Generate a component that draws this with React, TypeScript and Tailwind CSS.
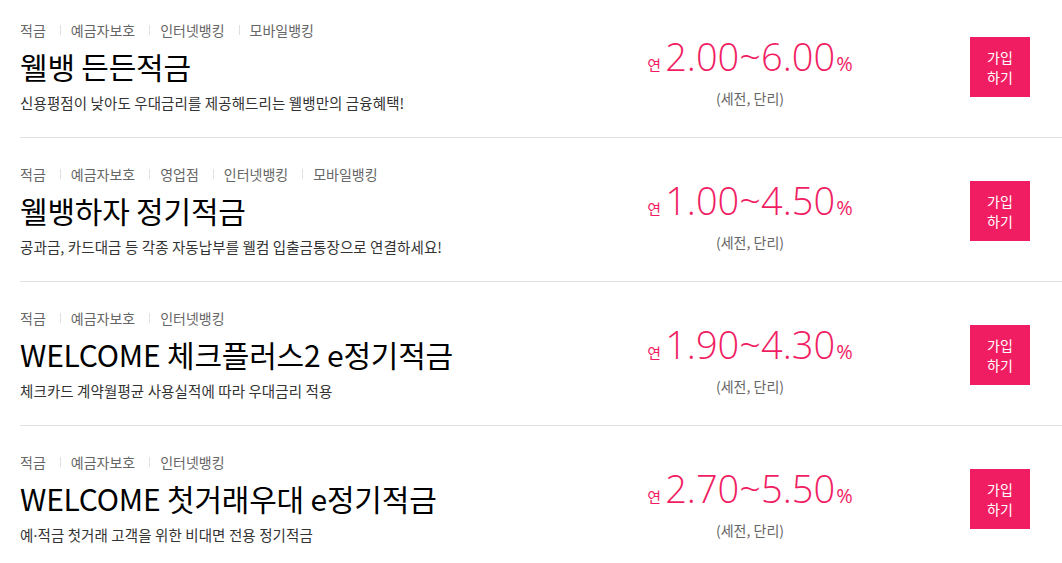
import type { ReactNode } from 'react';

const products: {
  tags: string[];
  name: string;
  desc: ReactNode;
  min: string;
  max: string;
}[] = [
  {
    tags: ['적금', '예금자보호', '인터넷뱅킹', '모바일뱅킹'],
    name: '웰뱅 든든적금',
    desc: '신용평점이 낮아도 우대금리를 제공해드리는 웰뱅만의 금융혜택!',
    min: '2.00',
    max: '6.00',
  },
  {
    tags: ['적금', '예금자보호', '영업점', '인터넷뱅킹', '모바일뱅킹'],
    name: '웰뱅하자 정기적금',
    desc: '공과금, 카드대금 등 각종 자동납부를 웰컴 입출금통장으로 연결하세요!',
    min: '1.00',
    max: '4.50',
  },
  {
    tags: ['적금', '예금자보호', '인터넷뱅킹'],
    name: 'WELCOME 체크플러스2 e정기적금',
    desc: '체크카드 계약월평균 사용실적에 따라 우대금리 적용',
    min: '1.90',
    max: '4.30',
  },
  {
    tags: ['적금', '예금자보호', '인터넷뱅킹'],
    name: 'WELCOME 첫거래우대 e정기적금',
    desc: (
      <>
        예<span className="font-['Noto_Sans',sans-serif]">·</span>적금 첫거래 고객을 위한 비대면 전용 정기적금
      </>
    ),
    min: '2.70',
    max: '5.50',
  },
];

type Product = (typeof products)[number];

function ProductRow({ item, first }: { item: Product; first: boolean }) {
  return (
    <li
      className={`flex items-center border-b border-[#e2e2e2] pb-[24px] ${first ? 'pt-[20px]' : 'pt-[26px]'}`}
    >
      {/* Info */}
      <div className="flex-1 min-w-0">
        <div className="flex items-center h-[20px] text-[14px] text-[#666]">
          {item.tags.map((tag, i) => (
            <span key={tag} className="flex items-center">
              {i > 0 && <span className="ml-[14px] mr-[10px] w-px h-[10px] bg-[#e0e0e0]" />}
              {tag}
            </span>
          ))}
        </div>
        <h3 className="mt-[6px] text-[30px] leading-[40px] text-black tracking-[-0.2px]">{item.name}</h3>
        <p className="mt-[7px] text-[14.5px] leading-[20px] tracking-[0.1px] text-[#333]">{item.desc}</p>
      </div>

      {/* Rate */}
      <div className="w-[260px] flex flex-col items-center mt-[6px]">
        <div className="flex items-baseline h-[50px] text-[#f11d63]">
          <span className="text-[15px] mr-[4px]">연</span>
          <span className="text-[38px] leading-[50px] font-light font-['Open_Sans',sans-serif]">
            {item.min}~{item.max}
          </span>
          <span className="text-[20px] ml-[1px] font-['Open_Sans',sans-serif]">%</span>
        </div>
        <p className="mt-[7px] text-[14px] leading-[20px] text-[#666]">(세전, 단리)</p>
      </div>

      {/* CTA */}
      <button className="ml-[90px] mr-[32px] w-[60px] h-[60px] bg-[#f11d63] text-white text-[14px] leading-[20px] flex flex-col items-center justify-center">
        <span>가입</span>
        <span>하기</span>
      </button>
    </li>
  );
}

export default function App() {
  return (
    <div
      className="w-[1062px] h-[563px] overflow-hidden bg-white pl-[20px]"
      style={{ fontFamily: '"Noto Sans CJK KR", "Noto Sans", sans-serif' }}
    >
      <ul>
        {products.map((item, i) => (
          <ProductRow key={item.name} item={item} first={i === 0} />
        ))}
      </ul>
    </div>
  );
}
